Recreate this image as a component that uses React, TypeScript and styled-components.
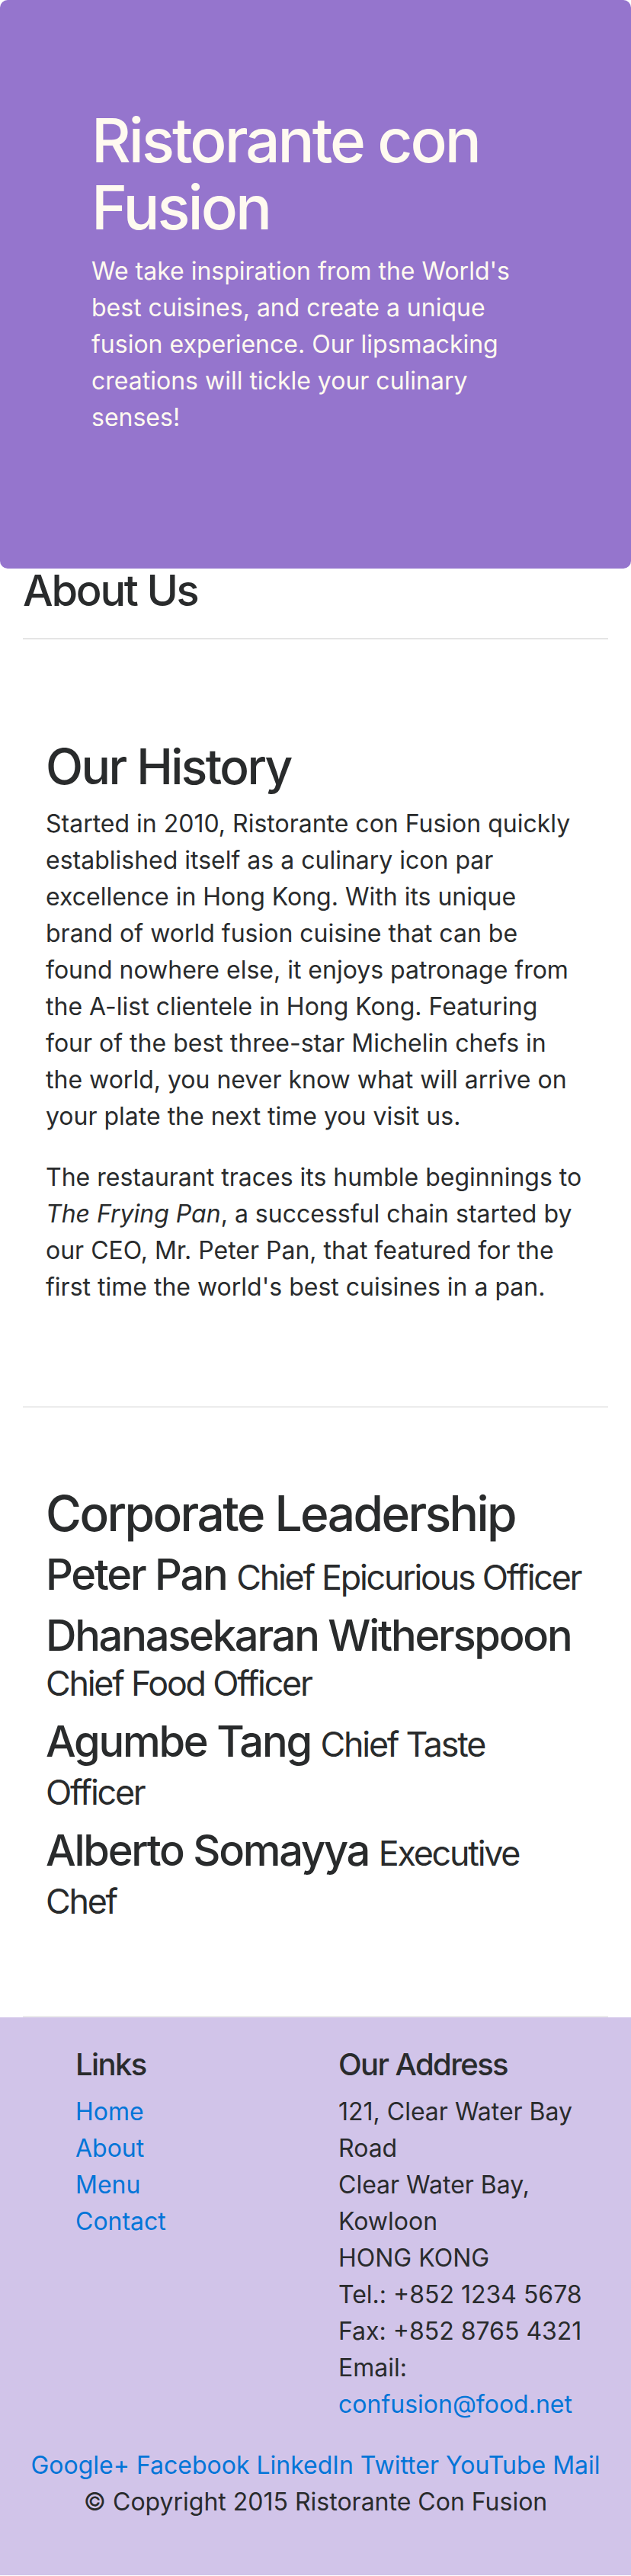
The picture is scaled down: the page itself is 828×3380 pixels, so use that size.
import React from "react";
import styled, { createGlobalStyle } from "styled-components";

const GlobalStyle = createGlobalStyle`
  *, *::before, *::after { box-sizing: border-box; }
  html, body { margin: 0; padding: 0; background: #ffffff; }
  body {
    font-family: Inter, "Liberation Sans", Arial, sans-serif;
    font-size: 32px;
    line-height: 48px;
    color: #292b2c;
    -webkit-font-smoothing: antialiased;
  }
`;

const Jumbotron = styled.header`
  background: #9575cd;
  color: #fffaf0;
  padding: 140px 60px 142px;
  border-radius: 10px;
`;

const HeroInner = styled.div`
  padding: 0 60px;
`;

const HeroTitle = styled.h1`
  margin: 0 0 16px;
  font-size: 80px;
  line-height: 88px;
  font-weight: 500;
  letter-spacing: -0.038em;
`;

const HeroText = styled.p`
  margin: 0 0 32px;
`;

const Container = styled.main`
  padding: 0 30px;
`;

const PageHeading = styled.h3`
  margin: 0 0 16px;
  font-size: 56px;
  line-height: 59px;
  font-weight: 500;
  letter-spacing: -0.04em;
`;

const Rule = styled.hr`
  border: 0;
  border-top: 2px solid rgba(0, 0, 0, 0.1);
  margin: 32px 0;
`;

const Section = styled.section<{ $centered?: boolean }>`
  padding: 100px 30px;
  border-bottom: 2px solid #ececec;
  display: flex;
  flex-direction: column;
  justify-content: ${(p) => (p.$centered ? "center" : "flex-start")};
  min-height: ${(p) => (p.$centered ? "800px" : "0")};
`;

const SectionTitle = styled.h2`
  margin: 0 0 16px;
  font-size: 64px;
  line-height: 70px;
  font-weight: 500;
  letter-spacing: -0.04em;
`;

const Paragraph = styled.p`
  margin: 0 0 32px;
`;

const LeaderName = styled.h3`
  margin: 0 0 17px;
  font-size: 56px;
  line-height: 59px;
  font-weight: 500;
  letter-spacing: -0.04em;
`;

const Role = styled.small`
  font-size: 80%;
  font-weight: 400;
  letter-spacing: -0.05em;
`;

const Footer = styled.footer`
  background: #d1c4e9;
  padding: 40px 0;
`;

const FooterRow = styled.div`
  display: grid;
  grid-template-columns: 1fr 5fr 6fr;
`;

const FooterCol = styled.div<{ $start: number }>`
  grid-column-start: ${(p) => p.$start};
  padding: 0 30px;
`;

const FooterHeading = styled.h5`
  margin: 0 0 16px;
  font-size: 40px;
  line-height: 44px;
  font-weight: 500;
  letter-spacing: -0.04em;
`;

const LinkList = styled.ul`
  list-style: none;
  margin: 0 0 32px;
  padding: 0;
`;

const Link = styled.a`
  color: #0275d8;
  text-decoration: none;
`;

const Address = styled.address`
  font-style: normal;
  margin: 0 0 32px;
`;

const Social = styled.div`
  text-align: center;
  padding: 0 30px;
`;

const Copyright = styled.p`
  text-align: center;
  margin: 0 0 32px;
`;

const leaders = [
  { name: "Peter Pan", role: "Chief Epicurious Officer" },
  { name: "Dhanasekaran Witherspoon", role: "Chief Food Officer" },
  { name: "Agumbe Tang", role: "Chief Taste Officer" },
  { name: "Alberto Somayya", role: "Executive Chef" },
];

const socials = ["Google+", "Facebook", "LinkedIn", "Twitter", "YouTube", "Mail"];

export default function App() {
  return (
    <>
      <GlobalStyle />
      <Jumbotron>
        <HeroInner>
          <HeroTitle>Ristorante con Fusion</HeroTitle>
          <HeroText>
            We take inspiration from the World's best cuisines, and create a
            unique fusion experience. Our lipsmacking creations will tickle
            your culinary senses!
          </HeroText>
        </HeroInner>
      </Jumbotron>
      <Container>
        <PageHeading>About Us</PageHeading>
        <Rule />
        <Section>
          <SectionTitle>Our History</SectionTitle>
          <Paragraph>
            Started in 2010, Ristorante con Fusion quickly established itself
            as a culinary icon par excellence in Hong Kong. With its unique
            brand of world fusion cuisine that can be found nowhere else, it
            enjoys patronage from the A-list clientele in Hong Kong. Featuring
            four of the best three-star Michelin chefs in the world, you never
            know what will arrive on your plate the next time you visit us.
          </Paragraph>
          <Paragraph>
            The restaurant traces its humble beginnings to{" "}
            <em>The Frying Pan</em>, a successful chain started by our CEO,
            Mr. Peter Pan, that featured for the first time the world's best
            cuisines in a pan.
          </Paragraph>
        </Section>
        <Section $centered>
          <SectionTitle>Corporate Leadership</SectionTitle>
          {leaders.map((l) => (
            <LeaderName key={l.name}>
              {l.name} <Role>{l.role}</Role>
            </LeaderName>
          ))}
        </Section>
      </Container>
      <Footer>
        <FooterRow>
          <FooterCol $start={2}>
            <FooterHeading>Links</FooterHeading>
            <LinkList>
              <li><Link href="#">Home</Link></li>
              <li><Link href="#">About</Link></li>
              <li><Link href="#">Menu</Link></li>
              <li><Link href="#">Contact</Link></li>
            </LinkList>
          </FooterCol>
          <FooterCol $start={3}>
            <FooterHeading>Our Address</FooterHeading>
            <Address>
              121, Clear Water Bay Road
              <br />
              Clear Water Bay, Kowloon
              <br />
              HONG KONG
              <br />
              Tel.: +852 1234 5678
              <br />
              Fax: +852 8765 4321
              <br />
              Email: <Link href="#">confusion@food.net</Link>
            </Address>
          </FooterCol>
        </FooterRow>
        <Social>
          {socials.map((s, i) => (
            <React.Fragment key={s}>
              {i > 0 ? " " : ""}
              <Link href="#">{s}</Link>
            </React.Fragment>
          ))}
        </Social>
        <Copyright>© Copyright 2015 Ristorante Con Fusion</Copyright>
      </Footer>
    </>
  );
}
